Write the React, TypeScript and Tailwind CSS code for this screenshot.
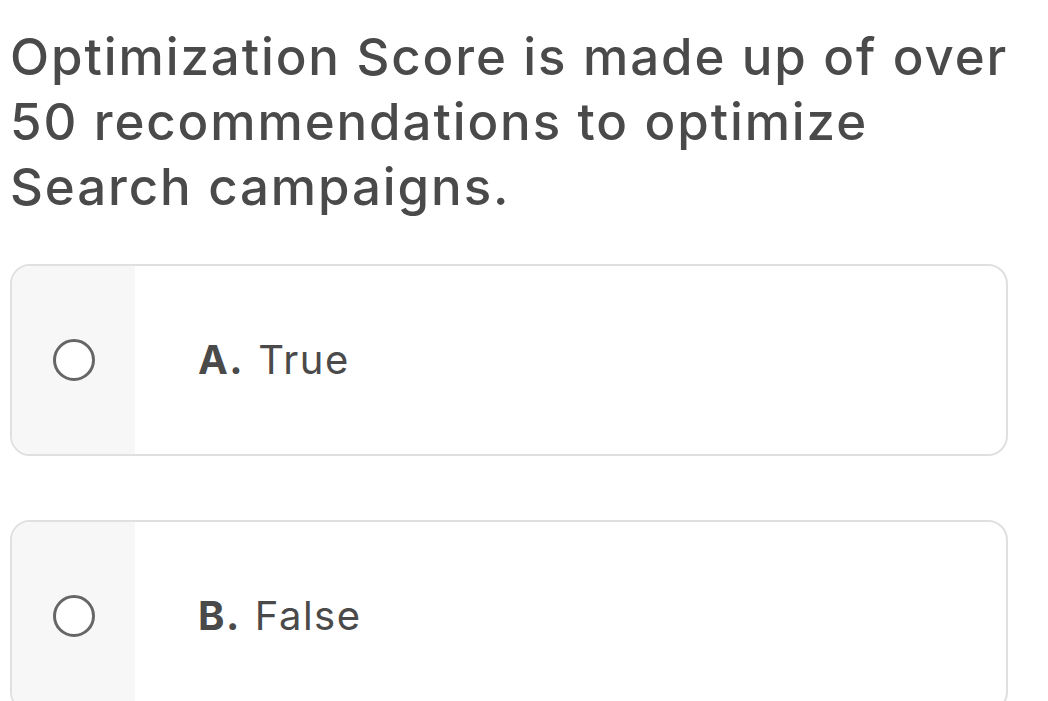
import React from 'react';

const opcoes = [
  { letra: 'A.', texto: 'True' },
  { letra: 'B.', texto: 'False' },
];

export default function App() {
  return (
    <div className="w-[1048px] h-[701px] overflow-hidden bg-white pl-[10px] pr-[20px] pt-[24px] font-['Inter',sans-serif] text-[#4a4a4a]">
      <h1 className="text-[51px] leading-[65px] font-medium tracking-[1.9px]">
        Optimization Score is made up of over 50 recommendations to optimize
        Search campaigns.
      </h1>

      <div className="mt-[45px] mr-[20px] flex flex-col gap-[64px]">
        {opcoes.map((op) => (
          <div
            key={op.letra}
            className="flex h-[192px] shrink-0 overflow-hidden rounded-[20px] border-2 border-[#e0e0e0] bg-white"
          >
            <div className="flex w-[123px] items-center justify-center bg-[#f7f7f7]">
              <span className="block h-[42px] w-[42px] rounded-full border-[3px] border-[#666] bg-white" />
            </div>
            <div className="flex items-center pl-[63px] text-[40px] tracking-[1.5px]">
              <span className="font-bold">{op.letra}</span>
              <span className="ml-[14px]">{op.texto}</span>
            </div>
          </div>
        ))}
      </div>
    </div>
  );
}
